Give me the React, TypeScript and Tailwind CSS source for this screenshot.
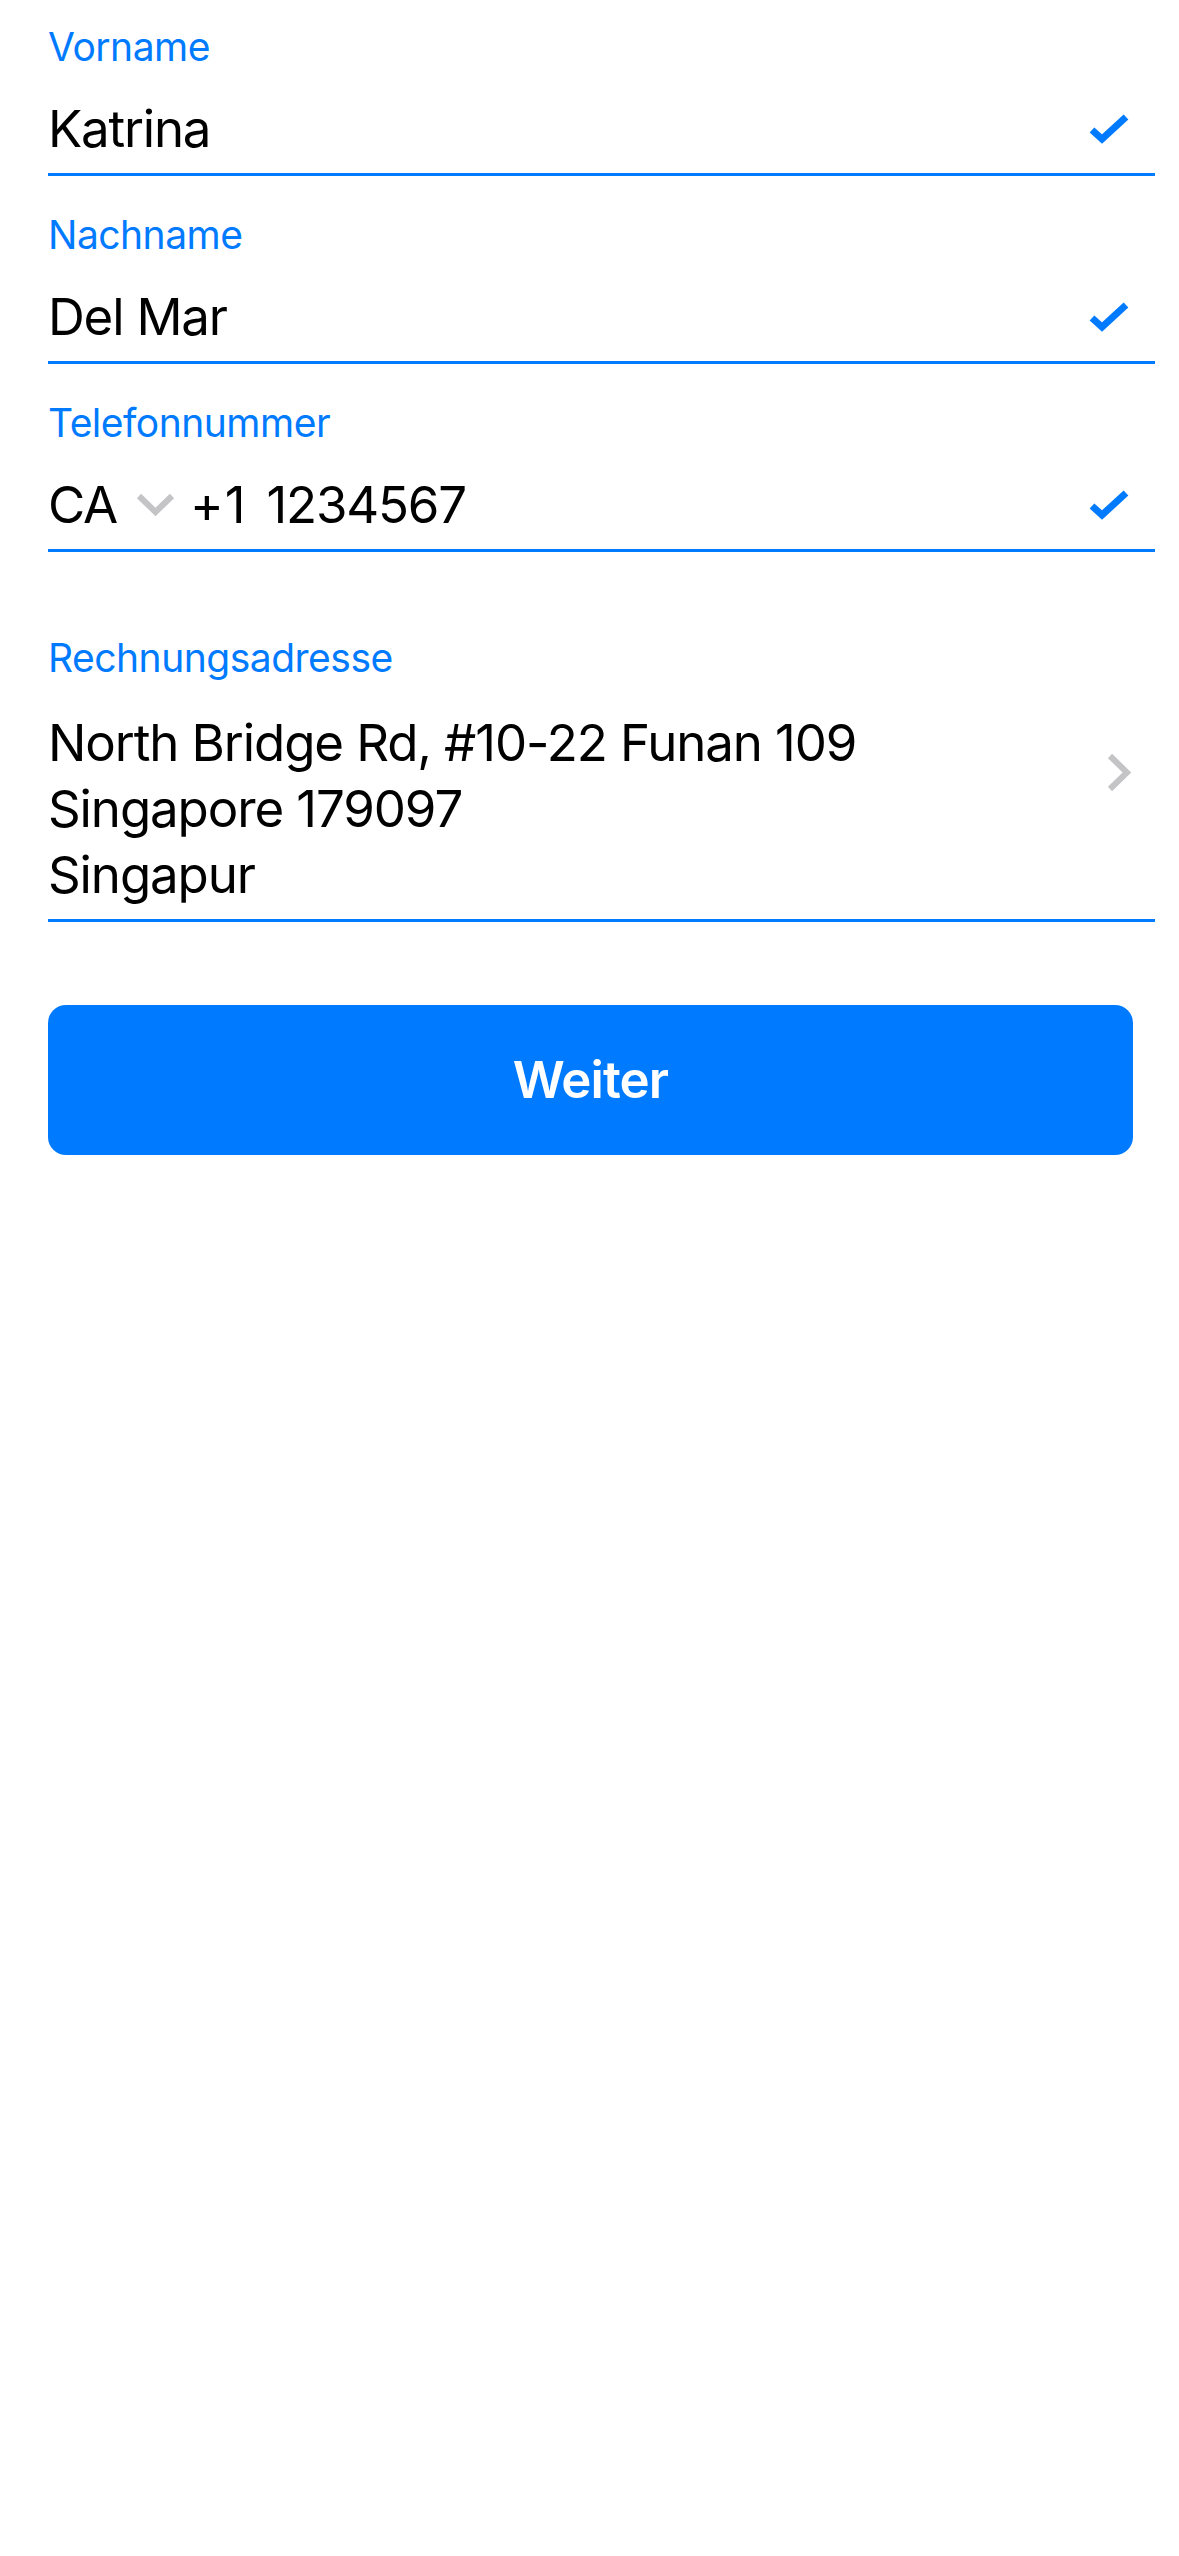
// Rechnungsdaten-Formular
const FONT = "font-['Inter','Noto_Sans',sans-serif]"

const Check = () => (
  <svg width="40" height="32" viewBox="0 0 40 32" className="shrink-0" aria-hidden>
    <polyline points="3,17 13,26 37,4" fill="none" stroke="#007AFF" strokeWidth="7" strokeLinejoin="miter" />
  </svg>
)

const ChevronDown = () => (
  <svg width="39" height="24" viewBox="0 0 39 24" aria-hidden>
    <polyline points="3,3 19.5,19 36,3" fill="none" stroke="#c4c4c7" strokeWidth="6" />
  </svg>
)

const ChevronRight = () => (
  <svg width="24" height="39" viewBox="0 0 24 39" aria-hidden>
    <polyline points="3,3 20,19.5 3,36" fill="none" stroke="#c4c4c7" strokeWidth="6" />
  </svg>
)

interface FieldProps {
  label: string
  children: React.ReactNode
}

const Field = ({ label, children }: FieldProps) => (
  <div className="flex flex-col border-b-[3px] border-[#007AFF] pb-[14px]">
    <span className="h-[48px] text-[39px] leading-[48px] tracking-[-0.5px] text-[#007AFF]">{label}</span>
    <div className="mt-[28px] flex h-[60px] items-center justify-between pr-[26px]">
      {children}
      <Check />
    </div>
  </div>
)

export default function App() {
  return (
    <div className={`${FONT} min-h-[2556px] w-[1179px] bg-white text-black`}>
      <div className="flex flex-col gap-[35px] pl-[48px] pr-[24px] pt-[23px]">
        <Field label="Vorname">
          <span className="text-[51px] leading-[60px] tracking-[-1.2px]">Katrina</span>
        </Field>
        <Field label="Nachname">
          <span className="text-[51px] leading-[60px] tracking-[-1.2px]">Del Mar</span>
        </Field>
        <Field label="Telefonnummer">
          <div className="flex items-center text-[51px] leading-[60px] tracking-[-1.2px]">
            <span>CA</span>
            <span className="ml-[19px] mr-[15px] flex items-center">
              <ChevronDown />
            </span>
            <span className="tracking-[1px]">+1</span>
            <span className="ml-[20px]">1234567</span>
          </div>
        </Field>
      </div>

      {/* Rechnungsadresse */}
      <div className="mt-[82px] ml-[48px] mr-[24px] flex flex-col border-b-[3px] border-[#007AFF] pb-[11px]">
        <span className="h-[48px] text-[39px] leading-[48px] tracking-[-0.5px] text-[#007AFF]">Rechnungsadresse</span>
        <div className="mt-[28px] flex items-start justify-between pr-[24px]">
          <div className="flex flex-col text-[51px] leading-[66px] tracking-[-1.1px]">
            <span>North Bridge Rd, #10-22 Funan 109</span>
            <span>Singapore 179097</span>
            <span>Singapur</span>
          </div>
          <span className="mt-[43px]">
            <ChevronRight />
          </span>
        </div>
      </div>

      <div className="ml-[48px] mr-[46px] mt-[83px]">
        <button className="flex h-[150px] w-full items-center justify-center rounded-[18px] bg-[#007AFF] text-[51px] font-semibold tracking-[-0.9px] text-white">
          Weiter
        </button>
      </div>
    </div>
  )
}
